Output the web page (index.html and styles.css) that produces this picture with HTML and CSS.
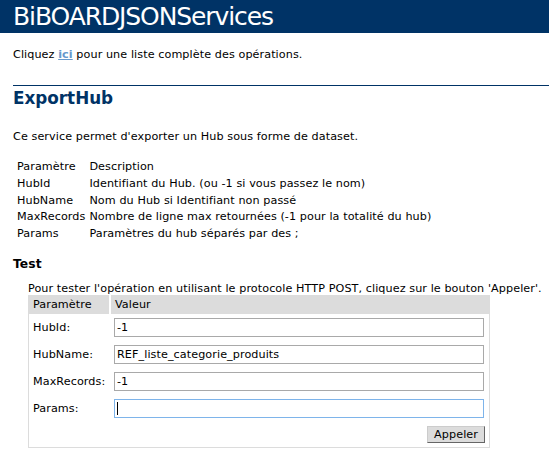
FILE: index.html
```html
<!DOCTYPE html>
<html lang="fr">
<head>
<meta charset="utf-8">
<title>BiBOARDJSONServices</title>
<link rel="stylesheet" href="styles.css">
</head>
<body>
<div class="heading1">BiBOARDJSONServices</div>
<div class="content">
  <p class="intro first">Cliquez <a href="#">ici</a> pour une liste complète des opérations.</p>
  <h2>ExportHub</h2>
  <p class="intro desc">Ce service permet d'exporter un Hub sous forme de dataset.</p>
  <table class="params">
    <tr><td>Paramètre</td><td>Description</td></tr>
    <tr><td>HubId</td><td>Identifiant du Hub. (ou -1 si vous passez le nom)</td></tr>
    <tr><td>HubName</td><td>Nom du Hub si Identifiant non passé</td></tr>
    <tr><td>MaxRecords</td><td>Nombre de ligne max retournées (-1 pour la totalité du hub)</td></tr>
    <tr><td>Params</td><td>Paramètres du hub séparés par des ;</td></tr>
  </table>
  <h3>Test</h3>
  <p class="frmtext">Pour tester l'opération en utilisant le protocole HTTP POST, cliquez sur le bouton 'Appeler'.</p>
  <form class="frm" action="#" method="post">
    <table class="frmtable">
      <tr><td class="frmheader col1">Paramètre</td><td class="frmheader">Valeur</td></tr>
      <tr><td class="label">HubId:</td><td class="field"><input class="frminput" type="text" value="-1"></td></tr>
      <tr><td class="label">HubName:</td><td class="field"><input class="frminput" type="text" value="REF_liste_categorie_produits"></td></tr>
      <tr><td class="label">MaxRecords:</td><td class="field"><input class="frminput" type="text" value="-1"></td></tr>
      <tr><td class="label">Params:</td><td class="field"><span class="focuswrap"><input class="frminput focused" type="text" value=""><span class="caret"></span></span></td></tr>
      <tr><td></td><td class="action"><button type="button" class="button">Appeler</button></td></tr>
    </table>
  </form>
</div>
</body>
</html>
```
FILE: styles.css
```css
html, body {
  margin: 0;
  padding: 0;
  background: #ffffff;
  color: #000000;
  font-family: "DejaVu Sans", Verdana, sans-serif;
  overflow: hidden;
}

.heading1 {
  background: #003366;
  color: #ffffff;
  font-size: 25px;
  letter-spacing: -1.1px;
  line-height: 25px;
  padding: 4px 0 4px 13px;
  white-space: nowrap;
}

.content {
  padding-left: 13px;
  font-size: 11.2px;
  line-height: 13px;
  letter-spacing: 0.08px;
}

.intro {
  margin: 0;
}

.intro.first {
  margin-top: 15px;
}

.intro.desc {
  margin-top: 22px;
}

a {
  color: #6699cc;
  font-weight: bold;
  text-decoration: underline;
}

h2 {
  margin: 24px 0 0 0;
  border-top: 1px solid #003366;
  padding-top: 2px;
  font-size: 16.8px;
  line-height: 20px;
  font-weight: bold;
  color: #003366;
  letter-spacing: 0;
}

.params {
  border-collapse: collapse;
  margin: 16px 0 0 2px;
}

.params td {
  padding: 2px;
  line-height: 12.8px;
  vertical-align: top;
  white-space: nowrap;
}

.params td:first-child {
  width: 68px;
}

h3 {
  margin: 13.6px 0 0 0;
  font-size: 12.3px;
  line-height: 15px;
  font-weight: bold;
}

.frmtext {
  margin: 10.3px 0 0 15px;
}

.frm {
  margin: 0 0 0 15px;
}

.frmtable {
  border-collapse: collapse;
  border: 1px solid #dcdcdc;
  table-layout: fixed;
  width: 462px;
}

.frmheader {
  background: #dcdcdc;
  padding: 2px 4px;
  line-height: 14px;
}

.frmheader.col1 {
  width: 72px;
  border-right: 2px solid #ffffff;
}

.label {
  padding: 4px;
  vertical-align: middle;
  white-space: nowrap;
}

.field {
  padding: 4px;
}

.frminput {
  display: block;
  box-sizing: border-box;
  width: 370px;
  height: 19px;
  margin: 0;
  padding: 0 2px;
  border: 1px solid #a9a9a9;
  font-family: "DejaVu Sans", Verdana, sans-serif;
  font-size: 11.2px;
  letter-spacing: 0.08px;
  color: #000000;
  background: #ffffff;
  outline: none;
}

.frminput.focused {
  border-color: #7eb4ea;
}

.focuswrap {
  position: relative;
  display: block;
}

.caret {
  position: absolute;
  left: 3px;
  top: 3px;
  width: 1px;
  height: 13px;
  background: #000000;
}

.action {
  padding: 4px;
  text-align: right;
}

.button {
  background: #dcdcdc;
  font-family: "DejaVu Sans", Verdana, sans-serif;
  font-size: 11.2px;
  letter-spacing: 0.08px;
  line-height: 13px;
  height: 17px;
  padding: 0 6px;
  margin: 0;
  color: #000000;
  border-top: 1px solid #cccccc;
  border-left: 1px solid #cccccc;
  border-bottom: 1px solid #666666;
  border-right: 1px solid #666666;
}
```
